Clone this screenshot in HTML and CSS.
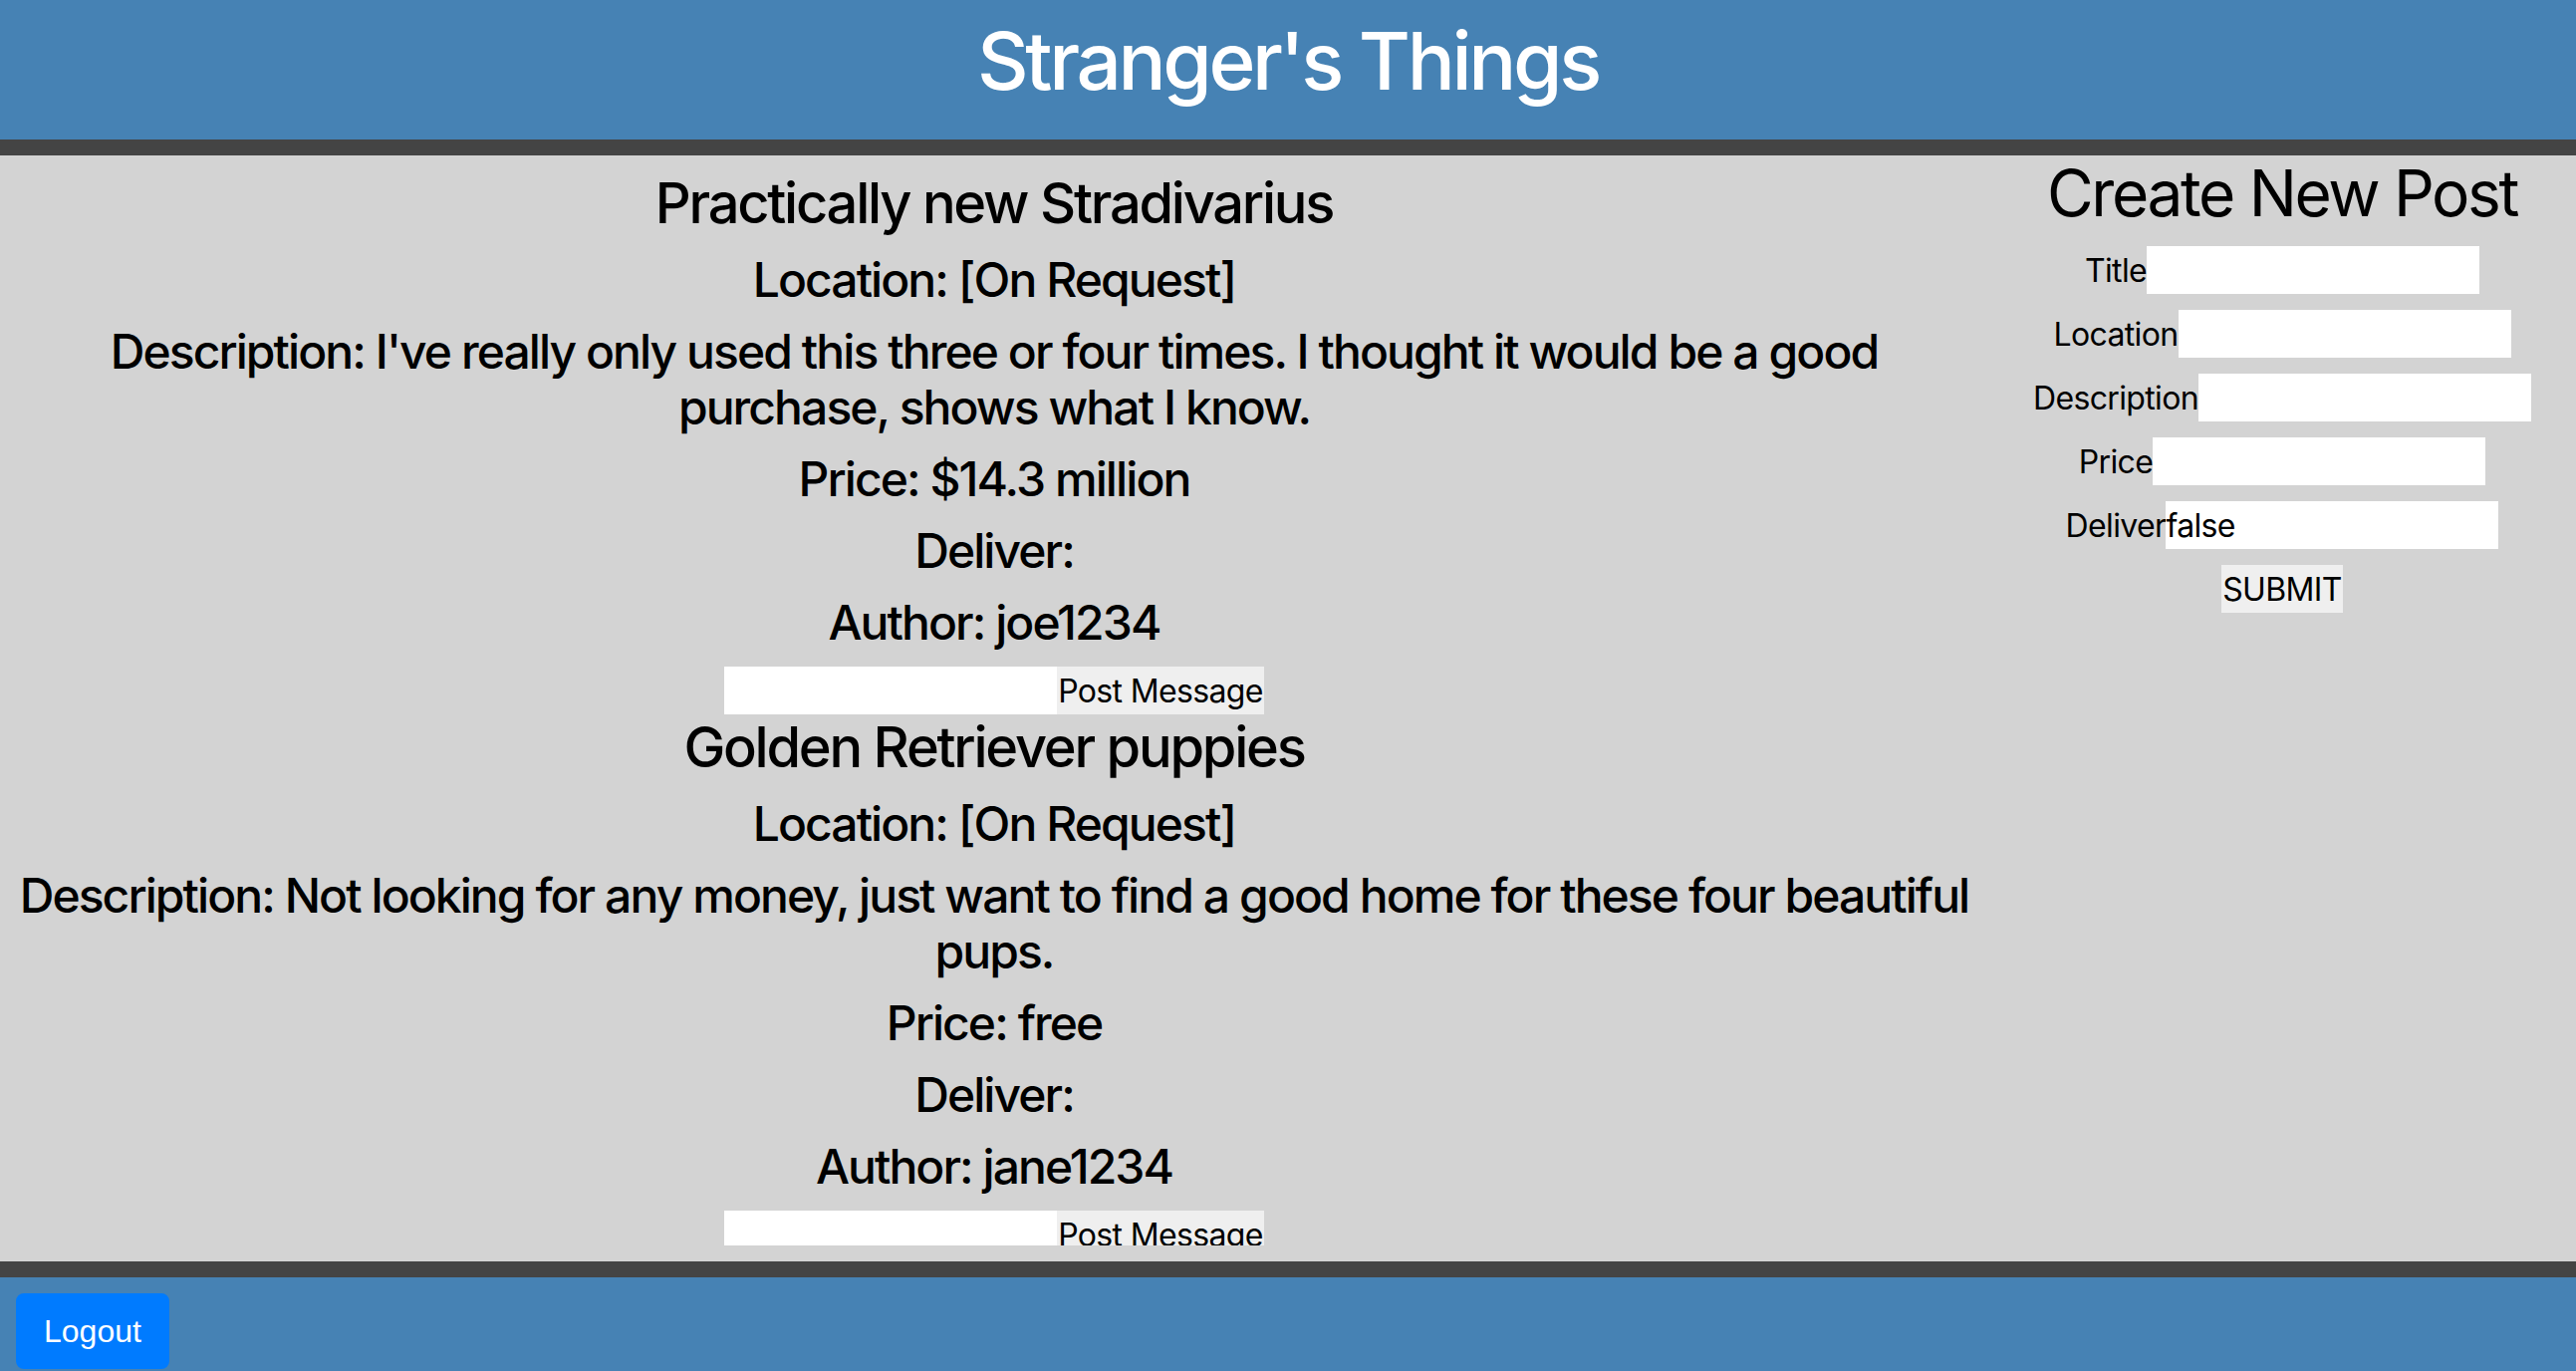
FILE: index.html
```html
<!DOCTYPE html>
<html lang="en">
<head>
    <meta charset="UTF-8">
    <meta name="viewport" content="width=device-width, initial-scale=1.0">
    <title>Stranger's Things</title>
    <link rel="stylesheet" href="styles.css">
</head>
<body>
    <header class="site-header">
        <h1>Stranger's Things</h1>
    </header>

    <main class="main">
        <div class="posts">
            <div class="post">
                <h2 class="post-title">Practically new Stradivarius</h2>
                <p>Location: [On Request]</p>
                <p>Description: I've really only used this three or four times. I thought it would be a good purchase, shows what I know.</p>
                <p>Price: $14.3 million</p>
                <p>Deliver:</p>
                <p>Author: joe1234</p>
                <form class="message-form">
                    <input type="text"><button type="submit">Post Message</button>
                </form>
            </div>
            <div class="post">
                <h2 class="post-title">Golden Retriever puppies</h2>
                <p>Location: [On Request]</p>
                <p>Description: Not looking for any money, just want to find a good home for these four beautiful pups.</p>
                <p>Price: free</p>
                <p>Deliver:</p>
                <p>Author: jane1234</p>
                <form class="message-form">
                    <input type="text"><button type="submit">Post Message</button>
                </form>
            </div>
        </div>

        <aside class="new-post">
            <h1>Create New Post</h1>
            <form class="new-post-form">
                <label class="field">Title<input type="text"></label>
                <label class="field">Location<input type="text"></label>
                <label class="field">Description<input type="text"></label>
                <label class="field">Price<input type="text"></label>
                <label class="field">Deliver<input type="text" value="false"></label>
                <button type="submit" class="submit-btn">SUBMIT</button>
            </form>
        </aside>
    </main>

    <footer class="site-footer">
        <button class="logout-btn">Logout</button>
    </footer>
</body>
</html>
```

FILE: styles.css
```css
body {
    margin: 0;
    font-family: Inter, "Noto Sans", sans-serif;
    color: #000;
    background-color: #d3d3d3;
}

.site-header {
    height: 156px;
    box-sizing: border-box;
    padding-top: 13px;
    background-color: #4682b4;
    border-bottom: 16px solid #444;
    text-align: center;
}

.site-header h1 {
    margin: 0;
    font-size: 80px;
    font-weight: 500;
    line-height: 96px;
    letter-spacing: -0.042em;
    color: white;
}

.main {
    display: grid;
    grid-template-columns: 1996px 1fr;
    height: 1094px;
    padding-bottom: 16px;
    background-color: #d3d3d3;
}

.posts {
    overflow: hidden;
    padding-top: 15px;
    text-align: center;
}

.post-title {
    margin: 0 0 16px;
    font-size: 56px;
    font-weight: 500;
    line-height: 66px;
    letter-spacing: -0.04em;
}

.post p {
    margin: 16px 0;
    font-size: 48px;
    font-weight: 500;
    line-height: 56px;
    letter-spacing: -0.04em;
}

.message-form {
    display: flex;
    justify-content: center;
    height: 48px;
}

.message-form input,
.new-post-form input {
    width: 334px;
    height: 48px;
    box-sizing: border-box;
    padding: 0;
    border: none;
    font-family: inherit;
    font-size: 32px;
    letter-spacing: -0.02em;
    background-color: white;
}

.message-form button,
.submit-btn {
    height: 48px;
    padding: 0 1px;
    border: none;
    font-family: inherit;
    font-size: 32px;
    letter-spacing: -0.02em;
    background-color: #efefef;
    color: #000;
}

.new-post {
    text-align: center;
}

.new-post h1 {
    margin: 0 0 15px;
    font-size: 64px;
    font-weight: 400;
    line-height: 76px;
    letter-spacing: -0.037em;
}

.new-post-form {
    display: flex;
    flex-direction: column;
    align-items: center;
    gap: 16px;
}

.field {
    display: flex;
    align-items: center;
    font-size: 32px;
    letter-spacing: -0.02em;
}

.site-footer {
    padding: 16px;
    background-color: #4682b4;
    border-top: 16px solid #444;
}

.logout-btn {
    padding: 12px 26px;
    border: 2px solid #007bff;
    border-radius: 8px;
    font-family: "Liberation Sans", Arial, sans-serif;
    font-size: 32px;
    line-height: 48px;
    background-color: #007bff;
    color: white;
}
```
